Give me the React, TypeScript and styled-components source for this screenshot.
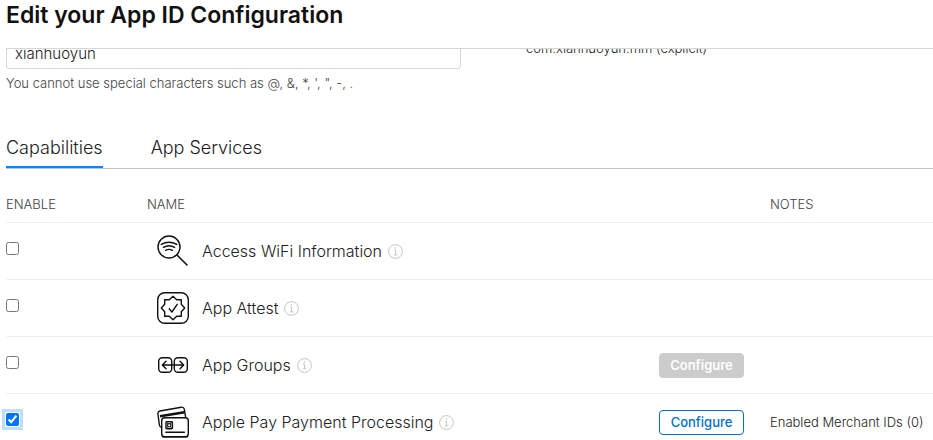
import React, { useState } from 'react';
import styled, { createGlobalStyle, css } from 'styled-components';

const GlobalStyle = createGlobalStyle`
  * { box-sizing: border-box; }
  body {
    margin: 0;
    background: #fff;
    color: #222;
    font-family: Inter, "Liberation Sans", sans-serif;
    font-size: 16px;
    overflow: hidden;
  }
`;

const Page = styled.div`
  padding-left: 6px;
`;

const Header = styled.header`
  position: sticky;
  top: 0;
  z-index: 1;
  height: 49px;
  background: #fff;
  border-bottom: 1px solid #d6d6d6;
`;

const Title = styled.h1`
  margin: 0;
  font-size: 23px;
  line-height: 30px;
  font-weight: 600;
  color: #111;
`;

const Form = styled.div`
  display: grid;
  grid-template-columns: 455px 1fr;
  column-gap: 65px;
  margin-top: -15px;
  color: #222;
`;

const NameInput = styled.input`
  display: block;
  width: 100%;
  height: 35px;
  padding: 4px 8px 0;
  border: 1px solid #d6d6d6;
  border-radius: 3px;
  font: 300 15px Inter, "Liberation Sans", sans-serif;
  color: #222;
`;

const Hint = styled.p`
  margin: 5px 0 0;
  font-size: 13px;
  font-weight: 300;
  line-height: 18px;
  color: #444;
`;

const BundleId = styled.div`
  padding-top: 5px;
  font-size: 13px;
  font-weight: 300;
  line-height: 18px;
`;

const Tabs = styled.div`
  display: flex;
  gap: 48px;
  margin-top: 42px;
  border-bottom: 1px solid #c4c4c4;
`;

const Tab = styled.button<{ $active?: boolean }>`
  padding: 0 0 4px;
  border: 0;
  border-bottom: 2px solid ${(p) => (p.$active ? '#0a84ff' : 'transparent')};
  background: none;
  font: 300 18px/28px Inter, "Liberation Sans", sans-serif;
  color: #222;
`;

const Table = styled.table`
  width: 100%;
  margin-top: 18px;
  table-layout: fixed;
  border-collapse: collapse;
  text-align: left;
`;

const HeadCell = styled.th<{ $width?: number }>`
  width: ${(p) => (p.$width ? `${p.$width}px` : 'auto')};
  height: 35px;
  padding: 0;
  border-bottom: 1px solid #f0f0f0;
  font-size: 13px;
  font-weight: 300;
  color: #444;
`;

const Cell = styled.td`
  height: 57px;
  padding: 0;
  border-bottom: 1px solid #f0f0f0;
  font-size: 13px;
  font-weight: 300;
  white-space: nowrap;
`;

const Check = styled.input`
  display: block;
  width: 13px;
  height: 13px;
  margin: 0 0 5px;
  accent-color: #0075ff;
  &:checked {
    box-shadow: 0 0 0 1px #fff, 0 0 0 4px #bfdfff;
  }
`;

const Name = styled.div`
  display: flex;
  align-items: center;
  padding-left: 10px;
`;

const NameLabel = styled.label`
  display: flex;
  align-items: center;
  gap: 13px;
  font-size: 16px;
`;

const InfoButton = styled.button`
  display: flex;
  margin-left: 6px;
  padding: 1px 0 0;
  border: 0;
  background: none;
`;

const Configure = styled.button`
  display: block;
  width: 85px;
  height: 25px;
  margin-top: 1px;
  padding: 0 0 1px;
  border-radius: 4px;
  font: 500 13px Inter, "Liberation Sans", sans-serif;
  ${(p) =>
    p.disabled
      ? css`
          border: 1px solid #ccc;
          background: #ccc;
          color: #fff;
          font-weight: 600;
        `
      : css`
          border: 1px solid #0070c9;
          background: #fff;
          color: #0070c9;
        `}
`;

const Drawing = ({ children }: { children: React.ReactNode }) => (
  <svg width="32" height="32" viewBox="0 0 32 32" fill="none" stroke="#111" strokeWidth="1.4" strokeLinecap="round" strokeLinejoin="round" aria-hidden="true">
    {children}
  </svg>
);

const WifiIcon = () => (
  <Drawing>
    <circle cx="12" cy="12" r="11" />
    <path d="M20 20 30 30" strokeWidth="1.6" />
    <path d="M4.2 9.4Q12 5 19.8 9.4M6.4 12.4Q12 9.2 17.6 12.4M8.6 15.3Q12 13.5 15.4 15.3" />
  </Drawing>
);

const AttestIcon = () => (
  <Drawing>
    <rect x="0.7" y="0.7" width="30.6" height="30.6" rx="7" />
    <path d="M16 4.3 19.7 7.7H24.3V12.3L27.7 16 24.3 19.7V24.3H19.7L16 27.7 12.3 24.3H7.7V19.7L4.3 16 7.7 12.3V7.7H12.3Z" />
    <path d="M12.2 16.8 14.9 20 20.2 12.3" />
  </Drawing>
);

const GroupsIcon = () => (
  <Drawing>
    <rect x="1.7" y="8.7" width="13" height="14.6" rx="3.5" />
    <rect x="17.3" y="8.7" width="13" height="14.6" rx="3.5" />
    <path d="M5.5 16H26.5M9 12.3 5.3 16 9 19.7M23 12.3 26.7 16 23 19.7" />
  </Drawing>
);

const CardsIcon = () => (
  <Drawing>
    <path d="M4.2 21.4C3 21.2 2.6 20.3 2.4 19L.9 8C.7 6.4 1.5 5.3 3 5L24.2 1.2C25.8 1 27 1.7 27.3 3.2L28.6 11" />
    <path d="M3 10.2 27.5 6.2" strokeWidth="2.6" strokeLinecap="butt" />
    <rect x="4.7" y="11.7" width="26.6" height="19" rx="3" />
    <path d="M5.5 30.8H30.5" strokeWidth="1.6" />
    <rect x="9" y="15.8" width="6.4" height="7" rx="1" />
    <path d="M9 15.8 15.4 22.8M15.4 15.8 9 22.8" strokeWidth="0.8" />
    <circle cx="12.2" cy="19.3" r="1.7" fill="#fff" strokeWidth="1.1" />
    <path d="M8.8 26.3H27.4" />
  </Drawing>
);

const InfoIcon = () => (
  <svg width="15" height="15" viewBox="0 0 15 15" fill="none" stroke="#c4c4c4" aria-hidden="true">
    <circle cx="7.5" cy="7.5" r="6.9" />
    <path d="M6 6.2H7.6V10.8M5.8 10.9H9.4" />
    <circle cx="7.4" cy="4" r="0.8" fill="#c4c4c4" stroke="none" />
  </svg>
);

type Capability = {
  id: string;
  name: string;
  icon: React.ReactNode;
  configurable?: boolean;
  notes?: string;
};

const capabilities: Capability[] = [
  { id: 'wifi', name: 'Access WiFi Information', icon: <WifiIcon /> },
  { id: 'attest', name: 'App Attest', icon: <AttestIcon /> },
  { id: 'groups', name: 'App Groups', icon: <GroupsIcon />, configurable: true },
  { id: 'pay', name: 'Apple Pay Payment Processing', icon: <CardsIcon />, configurable: true, notes: 'Enabled Merchant IDs (0)' },
];

export default function App() {
  const [enabled, setEnabled] = useState<Record<string, boolean>>({ pay: true });
  const toggle = (id: string) => setEnabled((e) => ({ ...e, [id]: !e[id] }));

  return (
    <>
      <GlobalStyle />
      <Page>
        <Header>
          <Title>Edit your App ID Configuration</Title>
        </Header>
        <main>
          <Form>
            <div>
              <NameInput aria-label="Description" defaultValue="xianhuoyun" />
              <Hint>You cannot use special characters such as @, &amp;, *, ', ", -, .</Hint>
            </div>
            <BundleId>com.xianhuoyun.mm (explicit)</BundleId>
          </Form>
          <Tabs role="tablist">
            <Tab role="tab" aria-selected="true" $active>Capabilities</Tab>
            <Tab role="tab" aria-selected="false">App Services</Tab>
          </Tabs>
          <Table>
            <thead>
              <tr>
                <HeadCell $width={141}>ENABLE</HeadCell>
                <HeadCell>NAME</HeadCell>
                <HeadCell $width={111} aria-label="Actions" />
                <HeadCell $width={163}>NOTES</HeadCell>
              </tr>
            </thead>
            <tbody>
              {capabilities.map((c) => (
                <tr key={c.id}>
                  <Cell>
                    <Check type="checkbox" id={c.id} checked={!!enabled[c.id]} onChange={() => toggle(c.id)} />
                  </Cell>
                  <Cell>
                    <Name>
                      <NameLabel htmlFor={c.id}>
                        {c.icon}
                        {c.name}
                      </NameLabel>
                      <InfoButton type="button" aria-label={`About ${c.name}`}>
                        <InfoIcon />
                      </InfoButton>
                    </Name>
                  </Cell>
                  <Cell>
                    {c.configurable && (
                      <Configure type="button" disabled={!enabled[c.id]}>Configure</Configure>
                    )}
                  </Cell>
                  <Cell>{c.notes}</Cell>
                </tr>
              ))}
            </tbody>
          </Table>
        </main>
      </Page>
    </>
  );
}
